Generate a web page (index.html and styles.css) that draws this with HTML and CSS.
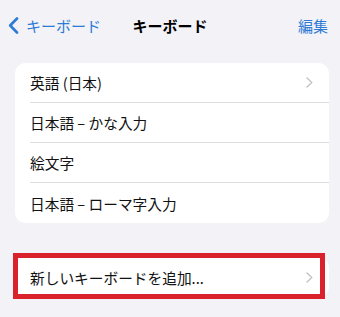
FILE: index.html
```html
<!DOCTYPE html>
<html lang="ja">
<head>
<meta charset="utf-8">
<link rel="stylesheet" href="styles.css">
</head>
<body>
<header class="nav">
  <div class="back">
    <svg class="back-icon" width="11" height="17" viewBox="0 0 11 17"><path d="M9 1.5 L2.2 8.5 L9 15.5" fill="none" stroke="currentColor" stroke-width="2.6" stroke-linecap="round" stroke-linejoin="round"/></svg>
    <span>キーボード</span>
  </div>
  <div class="title">キーボード</div>
  <div class="edit">編集</div>
</header>
<section class="card">
  <div class="row"><span class="label">英語 (日本)</span><svg class="chev" width="7" height="11" viewBox="0 0 7 11"><path d="M1 1 L5.8 5.5 L1 10" fill="none" stroke="currentColor" stroke-width="1.4" stroke-linecap="round" stroke-linejoin="round"/></svg></div>
  <div class="row"><span class="label">日本語 – かな入力</span></div>
  <div class="row"><span class="label">絵文字</span></div>
  <div class="row"><span class="label">日本語 – ローマ字入力</span></div>
</section>
<section class="card card-add">
  <div class="row"><span class="label">新しいキーボードを追加...</span><svg class="chev" width="7" height="11" viewBox="0 0 7 11"><path d="M1 1 L5.8 5.5 L1 10" fill="none" stroke="currentColor" stroke-width="1.4" stroke-linecap="round" stroke-linejoin="round"/></svg></div>
  <div class="highlight"></div>
</section>
</body>
</html>
```

FILE: styles.css
```css
html, body {
  margin: 0;
  padding: 0;
}
body {
  width: 340px;
  height: 317px;
  overflow: hidden;
  background: #f2f2f7;
  font-family: "Noto Sans CJK JP", "Noto Sans", sans-serif;
  color: #111;
}
.nav {
  height: 50px;
  display: grid;
  grid-template-columns: 1fr auto 1fr;
  align-items: center;
}
.back {
  display: flex;
  align-items: center;
  gap: 7px;
  padding-left: 8px;
  color: #2e7bd6;
  font-size: 15px;
}
.back-icon {
  display: block;
}
.title {
  font-size: 15px;
  font-weight: 700;
  color: #000;
}
.edit {
  justify-self: end;
  padding-right: 12px;
  color: #2e7bd6;
  font-size: 15px;
}
.card {
  margin: 13px 11px 0 15px;
  background: #fff;
  border-radius: 10px;
}
.card-add {
  position: relative;
  margin-top: 34px;
}
.row {
  height: 40px;
  margin-left: 15px;
  padding-right: 16px;
  display: flex;
  align-items: center;
  justify-content: space-between;
  border-bottom: 1px solid #dedee0;
  box-sizing: border-box;
  font-size: 14.7px;
}
.row:last-child,
.card-add .row {
  border-bottom: none;
}
.chev {
  color: #c3c3c7;
  display: block;
}
.highlight {
  position: absolute;
  top: -4px;
  left: -2px;
  right: 4px;
  bottom: -2px;
  border: 5px solid #d9222c;
  pointer-events: none;
}
```
